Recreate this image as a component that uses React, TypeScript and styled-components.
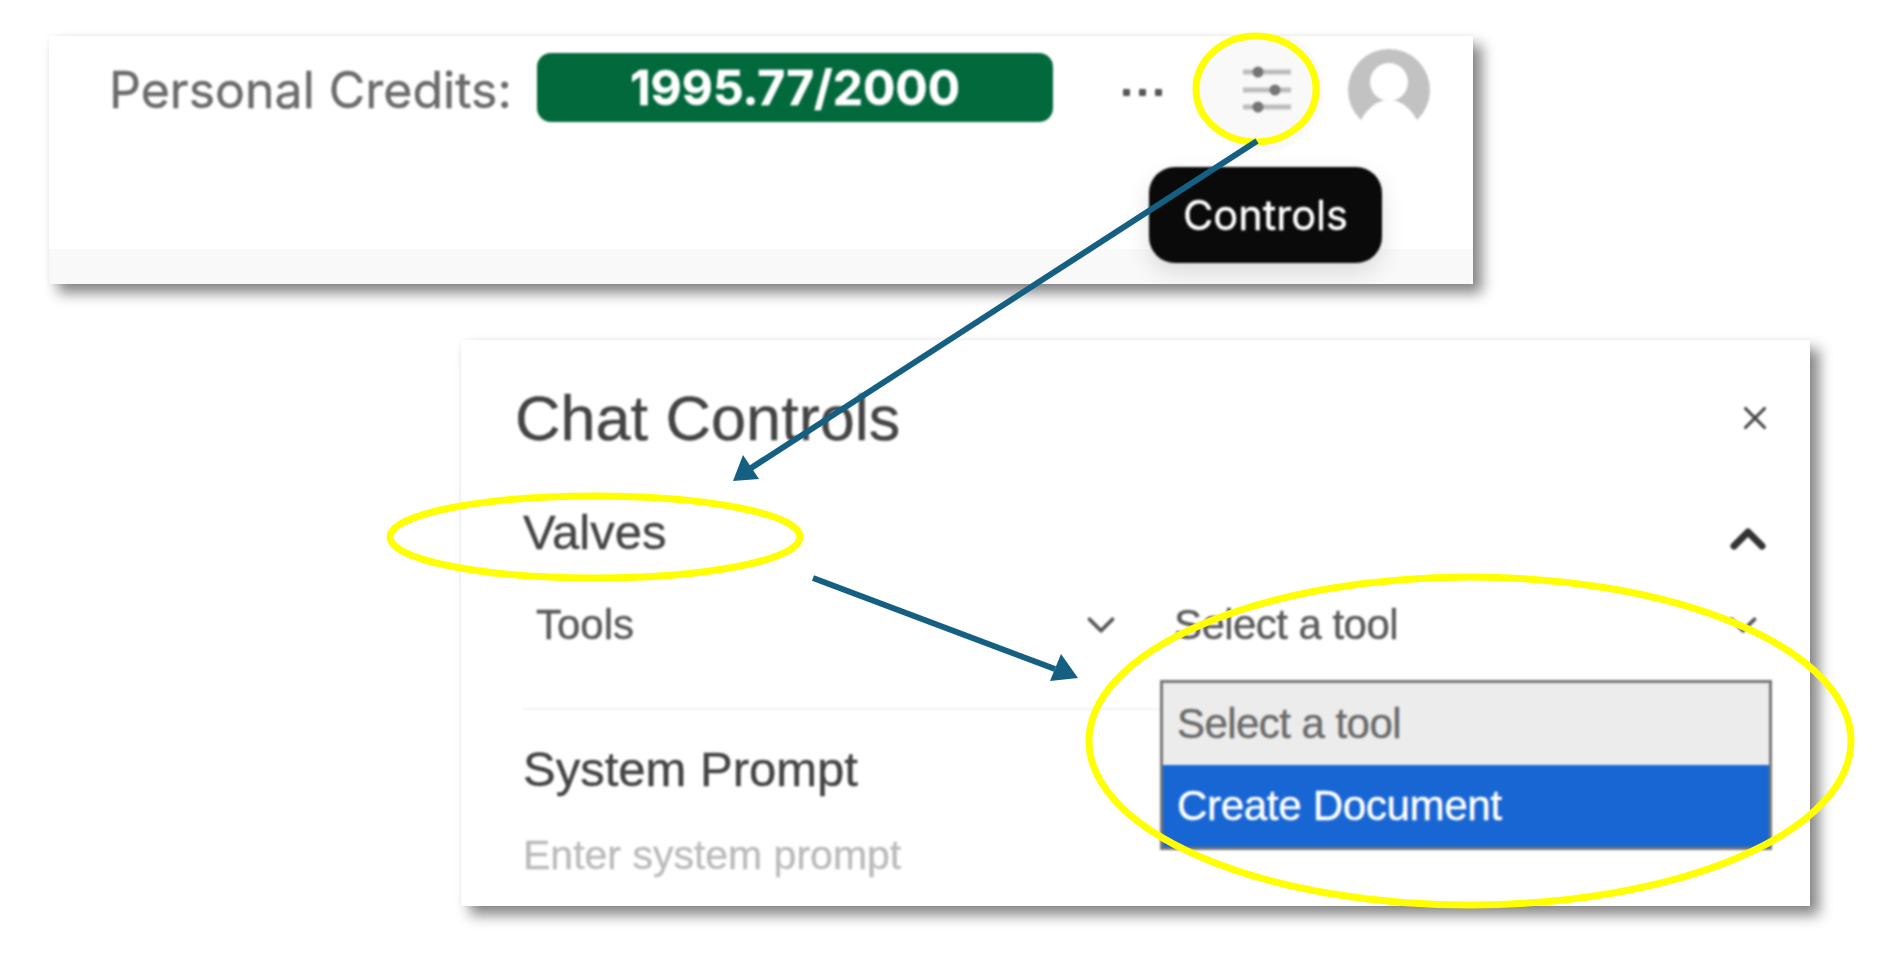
import styled, { createGlobalStyle } from 'styled-components';
import { ChevronDown, ChevronUp, X } from 'lucide-react';

const GlobalStyle = createGlobalStyle`
  html, body {
    margin: 0;
    background: #ffffff;
  }
  body {
    font-family: 'Liberation Sans', Arial, sans-serif;
  }
`;

const Page = styled.div`
  position: relative;
  width: 1902px;
  height: 966px;
  overflow: hidden;
  padding-top: 36px;
  box-sizing: border-box;
`;

const ShotPanel = styled.section`
  background: #ffffff;
  box-shadow: 9px 9px 13px rgba(0, 0, 0, 0.48), 0 0 4px rgba(0, 0, 0, 0.05);
`;

const CreditsPanel = styled(ShotPanel)`
  position: relative;
  margin-left: 49px;
  width: 1424px;
  height: 248px;
  overflow: hidden;
  display: flex;
  flex-direction: column;
  justify-content: space-between;
`;

const TopBar = styled.div`
  display: flex;
  align-items: center;
  height: 69px;
  margin-top: 17px;
  padding-left: 60px;
  filter: blur(0.8px);
  -webkit-text-stroke: 0.4px currentColor;
`;

const CreditsLabel = styled.span`
  font-family: Inter, sans-serif;
  font-size: 50px;
  color: #6b6b6b;
  width: 428px;
  margin-top: 5px;
  white-space: nowrap;
`;

const CreditsBadge = styled.div`
  width: 516px;
  height: 69px;
  border-radius: 14px;
  background: #02693d;
  color: #ffffff;
  display: flex;
  align-items: center;
  justify-content: center;
  font-family: Inter, sans-serif;
  font-size: 48px;
  font-weight: 700;
`;

const MoreDots = styled.svg`
  width: 44px;
  height: 10px;
  margin: 10px 0 0 68px;
`;

const ControlsButton = styled.div`
  position: relative;
  flex: none;
  width: 124px;
  height: 124px;
  margin: 5px 0 0 34px;
  border-radius: 50%;
  background: #f9f9f9;
  display: flex;
  align-items: center;
  justify-content: center;
`;

const SliderIcon = styled.svg`
  width: 50px;
  height: 50px;
  margin-left: 12px;
`;

const Tooltip = styled.div`
  position: absolute;
  left: -50px;
  top: 139px;
  width: 233px;
  height: 96px;
  border-radius: 26px;
  background: #0a0a0a;
  color: #ffffff;
  font-family: Inter, sans-serif;
  font-size: 41.5px;
  display: flex;
  align-items: center;
  justify-content: center;
  box-shadow: 0 10px 24px rgba(0, 0, 0, 0.12);
`;

const Avatar = styled.svg`
  flex: none;
  width: 84px;
  height: 84px;
  margin: 5px 0 0 24px;
`;

const FooterStrip = styled.div`
  height: 35px;
  background: #f9f9f9;
`;

const ControlsPanel = styled(ShotPanel)`
  margin: 56px 0 0 461px;
  width: 1349px;
  height: 566px;
  box-sizing: border-box;
  padding: 44px 36px 0 54px;
`;

const Blurred = styled.div`
  filter: blur(0.8px);
  -webkit-text-stroke: 0.4px currentColor;
`;

const PanelHeader = styled.div`
  display: flex;
  align-items: center;
  justify-content: space-between;
  height: 68px;
`;

const Title = styled.h2`
  margin: 0;
  font-size: 63px;
  font-weight: 400;
  color: #444444;
`;

const Section = styled.div`
  padding: 0 2px 0 8px;
`;

const SectionRow = styled.div`
  display: flex;
  justify-content: space-between;
  height: 60px;
  margin-top: 50px;
`;

const SectionLabel = styled.div`
  font-size: 49px;
  line-height: 60px;
  color: #444444;
`;

const CollapseIcon = styled(ChevronUp)`
  margin: 9px -4px 0 0;
`;

const SelectRow = styled.div`
  display: grid;
  grid-template-columns: 588px 592px;
  column-gap: 50px;
  height: 60px;
  margin-top: 33px;
  padding-left: 13px;
`;

const SelectBox = styled.div`
  position: relative;
  display: flex;
  align-items: center;
  justify-content: space-between;
  font-size: 42px;
  color: #5a5a5a;
`;

const SelectValue = styled.span`
  letter-spacing: -0.55px;
`;

const Dropdown = styled.div`
  position: absolute;
  left: -14px;
  top: 85px;
  width: 612px;
  border: 3px solid #777777;
  box-sizing: border-box;
  z-index: 2;
`;

const DropdownItem = styled.div<{ $active?: boolean }>`
  height: ${(p) => (p.$active ? '82px' : '82px')};
  display: flex;
  align-items: center;
  padding-left: 14px;
  font-size: 42px;
  letter-spacing: ${(p) => (p.$active ? '-0.3px' : '-0.55px')};
  color: ${(p) => (p.$active ? '#ffffff' : '#6a6a6a')};
  background: ${(p) => (p.$active ? '#1866d4' : '#ececec')};
`;

const Divider = styled.div`
  height: 2px;
  margin-top: 53px;
  background: #f1f1f1;
`;

const PromptLabel = styled(SectionLabel)`
  margin-top: 29px;
`;

const PromptPlaceholder = styled.div`
  margin-top: 26px;
  font-size: 41px;
  line-height: 60px;
  color: #bbbbbb;
`;

const Annotations = styled.svg`
  position: absolute;
  left: 0;
  top: 0;
  pointer-events: none;
  z-index: 5;
`;

export default function App() {
  return (
    <Page>
      <GlobalStyle />
      <CreditsPanel>
        <TopBar>
          <CreditsLabel>Personal Credits:</CreditsLabel>
          <CreditsBadge>1995.77/2000</CreditsBadge>
          <MoreDots viewBox="0 0 44 10">
            <rect x="2" y="1" width="7" height="7" rx="1" fill="#555" />
            <rect x="18" y="1" width="7" height="7" rx="1" fill="#555" />
            <rect x="34" y="1" width="7" height="7" rx="1" fill="#555" />
          </MoreDots>
          <ControlsButton>
            <SliderIcon viewBox="0 0 50 50">
              <g stroke="#bdbdbd" strokeWidth="5">
                <line x1="1" y1="7" x2="49" y2="7" />
                <line x1="1" y1="25" x2="49" y2="25" />
                <line x1="1" y1="42" x2="49" y2="42" />
              </g>
              <g fill="#757575">
                <circle cx="16" cy="7" r="5.5" />
                <circle cx="33" cy="25" r="5.5" />
                <circle cx="16" cy="42" r="5.5" />
              </g>
            </SliderIcon>
            <Tooltip>Controls</Tooltip>
          </ControlsButton>
          <Avatar viewBox="0 0 84 84">
            <circle cx="42" cy="42" r="41" fill="#c2c2c2" />
            <circle cx="42" cy="34" r="19" fill="#ffffff" />
            <path d="M13 74 C20 60 30 52 42 52 C54 52 64 60 71 74 L71 84 L13 84 Z" fill="#ffffff" />
          </Avatar>
        </TopBar>
        <FooterStrip />
      </CreditsPanel>

      <ControlsPanel>
        <Blurred>
          <PanelHeader>
            <Title>Chat Controls</Title>
            <X size={38} color="#444" strokeWidth={2} />
          </PanelHeader>
          <Section>
            <SectionRow>
              <SectionLabel>Valves</SectionLabel>
              <CollapseIcon size={56} color="#333" strokeWidth={3} />
            </SectionRow>
            <SelectRow>
              <SelectBox>
                Tools
                <ChevronDown size={46} color="#555" strokeWidth={2} />
              </SelectBox>
              <SelectBox>
                <SelectValue>Select a tool</SelectValue>
                <ChevronDown size={46} color="#555" strokeWidth={2} />
                <Dropdown>
                  <DropdownItem>Select a tool</DropdownItem>
                  <DropdownItem $active>Create Document</DropdownItem>
                </Dropdown>
              </SelectBox>
            </SelectRow>
            <Divider />
            <PromptLabel>System Prompt</PromptLabel>
            <PromptPlaceholder>Enter system prompt</PromptPlaceholder>
          </Section>
        </Blurred>
      </ControlsPanel>

      <Annotations width="1902" height="966" viewBox="0 0 1902 966">
        <g fill="none" stroke="#ffff00" strokeWidth="7">
          <ellipse cx="1256" cy="89" rx="60" ry="53" />
          <ellipse cx="595" cy="537" rx="205" ry="41" />
          <ellipse cx="1470" cy="741" rx="381" ry="164" />
        </g>
        <g stroke="#156082" strokeWidth="6">
          <line x1="1257" y1="141" x2="748" y2="470" />
          <line x1="813" y1="578" x2="1055" y2="669" />
        </g>
        <g fill="#156082">
          <polygon points="733,481 759,479 743,455" />
          <polygon points="1078,678 1050,681 1061,654" />
        </g>
      </Annotations>
    </Page>
  );
}
